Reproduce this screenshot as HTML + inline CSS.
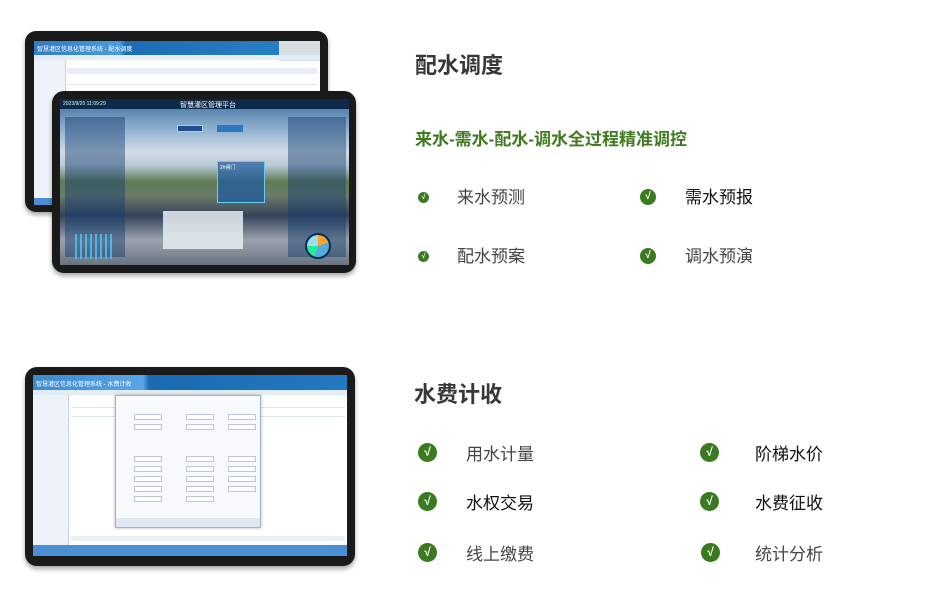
<!DOCTYPE html>
<html><head><meta charset="utf-8">
<style>
*{margin:0;padding:0;box-sizing:border-box}
body{width:931px;height:590px;background:#fff;position:relative;overflow:hidden;font-family:"Liberation Sans","Noto Sans CJK SC",sans-serif}
.abs{position:absolute}
.h{position:absolute;font-size:22px;font-weight:bold;color:#383838;line-height:1}
.sub{position:absolute;font-size:17px;font-weight:bold;color:#3f7a1e;line-height:1}
.t{position:absolute;font-size:17px;color:#444;line-height:1}
.t.d{color:#111}
.ck{position:absolute;border-radius:50%;background:#3c7a22;color:#fff;font-weight:bold;text-align:center}
.bz{position:absolute;background:#1a1a1a;border-radius:12px;box-shadow:0 3px 5px rgba(0,0,0,.35)}
.scr{position:absolute;overflow:hidden}
.f{position:absolute;width:28px;height:6px;background:#fff;border:1px solid #b8c6d6}
</style></head><body>

<!-- back tablet -->
<div class="bz" style="left:25px;top:31px;width:303px;height:181px;border-radius:11px"></div>
<div class="scr" style="left:34px;top:41px;width:286px;height:164px;background:#fff">
  <div class="abs" style="left:0;top:0;width:286px;height:14px;background:linear-gradient(90deg,#2f7dc4,#4a9be0 30%,#1d6db5 32%,#2a82c8)"></div>
  <div class="abs" style="left:3px;top:3px;font-size:6px;color:#fff">智慧灌区信息化管理系统 - 配水调度</div>
  <div class="abs" style="left:245px;top:0;width:41px;height:20px;background:#d8dde2"></div>
  <div class="abs" style="left:0;top:14px;width:286px;height:5px;background:#e4edf7"></div>
  <div class="abs" style="left:0;top:19px;width:32px;height:145px;background:#eef3f9;border-right:1px solid #c5d3e3"></div>
  <div class="abs" style="left:33px;top:27px;width:250px;height:6px;background:#e8eef5"></div>
  <div class="abs" style="left:33px;top:35px;width:250px;height:28px;background:repeating-linear-gradient(#fff 0,#fff 8px,#dde5ee 8px,#dde5ee 9px)"></div>
  <div class="abs" style="left:0;top:157px;width:286px;height:7px;background:#4b8fd2"></div>
</div>

<!-- front tablet -->
<div class="bz" style="left:52px;top:91px;width:304px;height:182px"></div>
<div class="scr" style="left:60px;top:99px;width:289px;height:166px;background:linear-gradient(180deg,#3d6f9f 0%,#8fb0cf 18%,#d2dde6 32%,#b8c8d4 40%,#5f7a53 50%,#6b7d6a 58%,#34425a 70%,#9aa3ad 85%,#6a7380 100%)">
  <div class="abs" style="left:0;top:0;width:289px;height:10px;background:#0e2a4a"></div>
  <div class="abs" style="left:3px;top:2px;font-size:5px;color:#cfe">2023/9/20 11:09:29</div>
  <div class="abs" style="left:120px;top:1px;font-size:7px;color:#fff">智慧灌区管理平台</div>
  <div class="abs" style="left:5px;top:18px;width:60px;height:140px;background:rgba(20,60,110,.45)"></div>
  <div class="abs" style="left:228px;top:18px;width:58px;height:140px;background:rgba(20,60,110,.45)"></div>
  <div class="abs" style="left:117px;top:26px;width:26px;height:7px;background:#1d4f8f;border:1px solid #9cf"></div>
  <div class="abs" style="left:157px;top:26px;width:26px;height:7px;background:#2b78c2"></div>
  <div class="abs" style="left:157px;top:62px;width:48px;height:42px;background:rgba(30,90,160,.7);border:1px solid #6cf;font-size:5px;color:#fff;padding:2px">2#闸门</div>
  <div class="abs" style="left:103px;top:112px;width:80px;height:38px;background:#e8eef2;opacity:.85"></div>
  <div class="abs" style="left:245px;top:134px;width:26px;height:26px;border-radius:50%;background:conic-gradient(#f5a623 0 20%,#5ad 20% 55%,#2e9 55% 75%,#9de 75%);border:2px solid #0a2a55"></div>
  <div class="abs" style="left:15px;top:135px;width:40px;height:25px;background:repeating-linear-gradient(90deg,#4ac8ff 0,#4ac8ff 2px,transparent 2px,transparent 5px);opacity:.8"></div>
</div>

<!-- bottom tablet -->
<div class="bz" style="left:25px;top:367px;width:330px;height:199px"></div>
<div class="scr" style="left:33px;top:375px;width:314px;height:181px;background:#fff">
  <div class="abs" style="left:0;top:0;width:314px;height:15px;background:linear-gradient(90deg,#3a8ad0,#59a5e6 35%,#1a6ab4 37%,#2478c0)"></div>
  <div class="abs" style="left:3px;top:4px;font-size:6px;color:#fff">智慧灌区信息化管理系统 - 水费计收</div>
  <div class="abs" style="left:0;top:15px;width:314px;height:5px;background:#e3ecf6"></div>
  <div class="abs" style="left:0;top:20px;width:36px;height:150px;background:#eef3f9;border-right:1px solid #c5d3e3"></div>
  <div class="abs" style="left:38px;top:24px;width:274px;height:26px;background:repeating-linear-gradient(#fff 0,#fff 8px,#dde5ee 8px,#dde5ee 9px)"></div>
  <div class="abs" style="left:82px;top:20px;width:146px;height:133px;background:#f7f9fc;border:1px solid #9bb6d4;box-shadow:0 0 3px rgba(0,0,0,.3)">
    <div class="f" style="left:18px;top:18px"></div><div class="f" style="left:70px;top:18px"></div><div class="f" style="left:112px;top:18px"></div>
    <div class="f" style="left:18px;top:28px"></div><div class="f" style="left:70px;top:28px"></div><div class="f" style="left:112px;top:28px"></div>
    <div class="f" style="left:18px;top:60px"></div><div class="f" style="left:70px;top:60px"></div><div class="f" style="left:112px;top:60px"></div>
    <div class="f" style="left:18px;top:70px"></div><div class="f" style="left:70px;top:70px"></div><div class="f" style="left:112px;top:70px"></div>
    <div class="f" style="left:18px;top:80px"></div><div class="f" style="left:70px;top:80px"></div><div class="f" style="left:112px;top:80px"></div>
    <div class="f" style="left:18px;top:90px"></div><div class="f" style="left:70px;top:90px"></div><div class="f" style="left:112px;top:90px"></div>
    <div class="f" style="left:18px;top:100px"></div><div class="f" style="left:70px;top:100px"></div>
  </div>
  <div class="abs" style="left:83px;top:143px;width:144px;height:9px;background:#dfe8f2"></div>
  <div class="abs" style="left:38px;top:161px;width:274px;height:5px;background:#e8eef5"></div>
  <div class="abs" style="left:0;top:170px;width:314px;height:11px;background:#4b8fd2"></div>
</div>

<!-- section 1 -->
<div class="h" style="left:415px;top:55px">配水调度</div>
<div class="sub" style="left:415px;top:131px">来水-需水-配水-调水全过程精准调控</div>
<div class="ck" style="left:418px;top:192px;width:11px;height:11px;font-size:7px;line-height:11px">√</div>
<div class="t" style="left:457px;top:189px">来水预测</div>
<div class="ck" style="left:640px;top:189px;width:16px;height:16px;font-size:10px;line-height:16px">√</div>
<div class="t d" style="left:685px;top:189px">需水预报</div>
<div class="ck" style="left:418px;top:251px;width:11px;height:11px;font-size:7px;line-height:11px">√</div>
<div class="t" style="left:457px;top:248px">配水预案</div>
<div class="ck" style="left:640px;top:248px;width:16px;height:16px;font-size:10px;line-height:16px">√</div>
<div class="t" style="left:685px;top:248px">调水预演</div>

<!-- section 2 -->
<div class="h" style="left:414px;top:384px">水费计收</div>
<div class="ck" style="left:418px;top:443px;width:19px;height:19px;font-size:12px;line-height:19px">√</div>
<div class="t" style="left:466px;top:446px">用水计量</div>
<div class="ck" style="left:700px;top:443px;width:19px;height:19px;font-size:12px;line-height:19px">√</div>
<div class="t d" style="left:755px;top:446px">阶梯水价</div>
<div class="ck" style="left:418px;top:492px;width:19px;height:19px;font-size:12px;line-height:19px">√</div>
<div class="t d" style="left:466px;top:495px">水权交易</div>
<div class="ck" style="left:700px;top:492px;width:19px;height:19px;font-size:12px;line-height:19px">√</div>
<div class="t d" style="left:755px;top:495px">水费征收</div>
<div class="ck" style="left:418px;top:543px;width:19px;height:19px;font-size:12px;line-height:19px">√</div>
<div class="t" style="left:466px;top:546px">线上缴费</div>
<div class="ck" style="left:701px;top:543px;width:19px;height:19px;font-size:12px;line-height:19px">√</div>
<div class="t" style="left:755px;top:546px">统计分析</div>
</body></html>
